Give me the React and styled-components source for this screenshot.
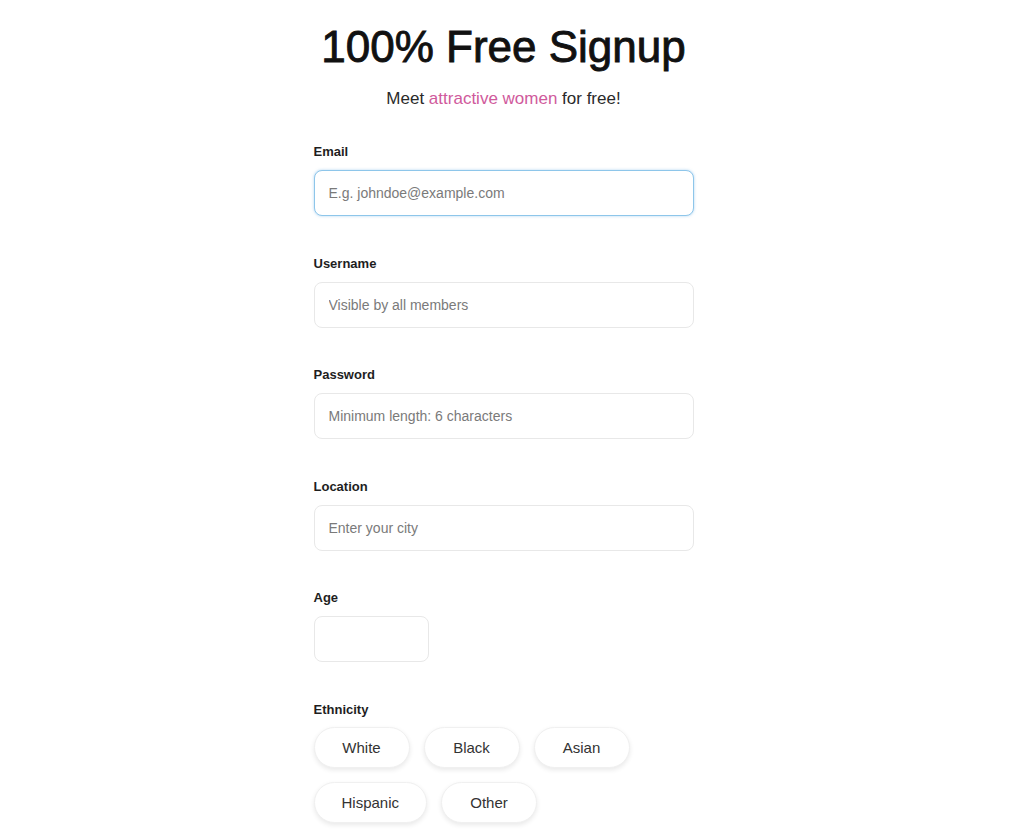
import React from "react";
import styled, { createGlobalStyle } from "styled-components";

const Global = createGlobalStyle`
  html, body { margin: 0; padding: 0; background: #ffffff; }
  body { font-family: "Liberation Sans", Arial, Helvetica, sans-serif; color: #222; }
  * { box-sizing: border-box; }
`;

const Page = styled.div`
  display: flex;
  justify-content: center;
  padding: 21px 17px 0 0;
  height: 835px;
  overflow: hidden;
`;

const Column = styled.div`
  width: 380px;
  display: flex;
  flex-direction: column;
`;

const Title = styled.h1`
  margin: 0 -40px;
  font-size: 44px;
  line-height: 52px;
  font-weight: 400;
  color: #111;
  text-align: center;
  -webkit-text-stroke: 0.9px #111;
  white-space: nowrap;
`;

const Subtitle = styled.p`
  margin: 16px 0 35px;
  font-size: 17px;
  line-height: 20px;
  color: #2a2a2a;
  text-align: center;
`;

const Accent = styled.span`
  color: #d05a9c;
`;

const Field = styled.div`
  display: flex;
  flex-direction: column;
  align-items: flex-start;
  margin-bottom: ${(p) => p.$gap ?? 39.5}px;
`;

const Label = styled.label`
  font-size: 13px;
  line-height: 16px;
  font-weight: 700;
  color: #1e1e1e;
  margin-bottom: ${(p) => p.$mb ?? 10}px;
`;

const Input = styled.input`
  width: ${(p) => p.$w || "100%"};
  height: 46px;
  padding: 0 14px;
  font-family: inherit;
  font-size: 14px;
  color: #333;
  background: #fff;
  border: 1px solid ${(p) => (p.$focus ? "#8ec6ea" : "#e8e8e8")};
  border-radius: 8px;
  outline: none;
  box-shadow: ${(p) =>
    p.$focus ? "0 0 3px rgba(110, 175, 230, 0.55)" : "none"};
  &::placeholder { color: #7a7a7a; }
`;

const Pills = styled.div`
  display: flex;
  flex-wrap: wrap;
  column-gap: 14px;
  row-gap: 14px;
  width: 340px;
`;

const Pill = styled.button`
  min-width: 96px;
  height: 41px;
  padding: 0 27px;
  border-radius: 21px;
  border: 1px solid #f0f0f0;
  background: #fff;
  box-shadow: 0 2px 5px rgba(0, 0, 0, 0.09);
  font-family: inherit;
  font-size: 15px;
  color: #333;
  cursor: pointer;
`;

export default function App() {
  return (
    <>
      <Global />
      <Page>
        <Column>
          <Title>100% Free Signup</Title>
          <Subtitle>
            Meet <Accent>attractive women</Accent> for free!
          </Subtitle>
          <Field>
            <Label>Email</Label>
            <Input $focus placeholder="E.g. johndoe@example.com" />
          </Field>
          <Field>
            <Label>Username</Label>
            <Input placeholder="Visible by all members" />
          </Field>
          <Field>
            <Label>Password</Label>
            <Input type="password" placeholder="Minimum length: 6 characters" />
          </Field>
          <Field>
            <Label>Location</Label>
            <Input placeholder="Enter your city" />
          </Field>
          <Field>
            <Label>Age</Label>
            <Input $w="115px" />
          </Field>
          <Field $gap={0}>
            <Label $mb={9}>Ethnicity</Label>
            <Pills>
              <Pill>White</Pill>
              <Pill>Black</Pill>
              <Pill>Asian</Pill>
              <Pill>Hispanic</Pill>
              <Pill>Other</Pill>
            </Pills>
          </Field>
        </Column>
      </Page>
    </>
  );
}
